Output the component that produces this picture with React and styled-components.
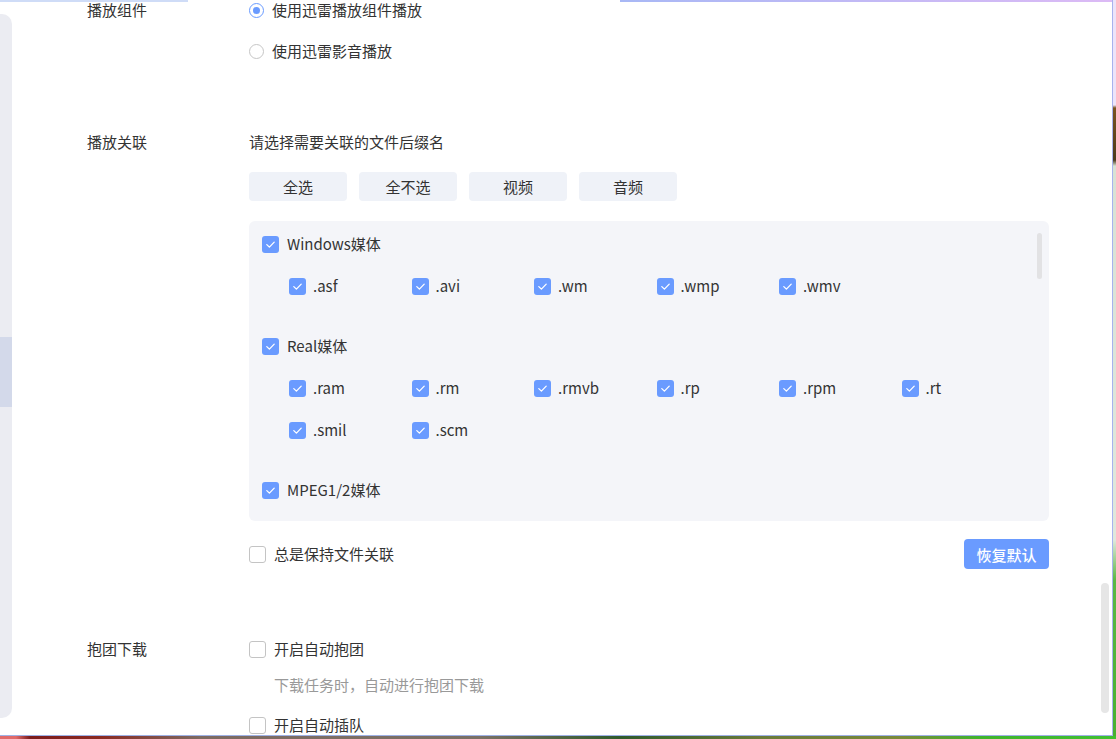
import styled, { createGlobalStyle } from "styled-components"

const GlobalStyle = createGlobalStyle`
	html, body {
		margin: 0;
		padding: 0;
	}
	body {
		width: 1116px;
		height: 739px;
		overflow: hidden;
		font-family: "Noto Sans CJK SC", "Noto Sans", sans-serif;
		font-size: 15px;
		color: #333;
		background: #fff;
	}
`

const groups = [
	{ name: "Windows媒体", items: [".asf", ".avi", ".wm", ".wmp", ".wmv"] },
	{ name: "Real媒体", items: [".ram", ".rm", ".rmvb", ".rp", ".rpm", ".rt", ".smil", ".scm"] },
	{ name: "MPEG1/2媒体", items: [] },
]

const CheckBox = ({ checked, children, sub }) => (
	<CheckRow sub={sub}>
		<Box checked={checked}>
			{checked && (
				<svg width="17" height="17" viewBox="0 0 17 17">
					<polyline points="4.8,8.6 7.4,11.1 12.2,6.1" fill="none" stroke="#fff" strokeWidth="1.3" strokeLinecap="round" strokeLinejoin="round" />
				</svg>
			)}
		</Box>
		{children}
	</CheckRow>
)

const Radio = ({ checked, children }) => (
	<RadioRow>
		<RadioDot checked={checked} />
		{children}
	</RadioRow>
)

const App = () => {
	return (
		<Page>
			<GlobalStyle />
			<WindowRow>
				<Window>
					<HeaderEdge />
					<Sidebar>
						<SidebarActive />
					</Sidebar>
					<Main>
						<Section>
							<Label>播放组件</Label>
							<Content>
								<Radio checked>使用迅雷播放组件播放</Radio>
								<Spacer h={21} />
								<Radio>使用迅雷影音播放</Radio>
							</Content>
						</Section>

						<Section top={71}>
							<Label>播放关联</Label>
							<Content>
								<Line>请选择需要关联的文件后缀名</Line>
								<ButtonRow>
									<FilterButton>全选</FilterButton>
									<FilterButton>全不选</FilterButton>
									<FilterButton>视频</FilterButton>
									<FilterButton>音频</FilterButton>
								</ButtonRow>
								<Panel>
									{groups.map((g, i) => (
										<Group key={g.name} first={i === 0}>
											<CheckBox checked>{g.name}</CheckBox>
											{g.items.length > 0 && (
												<ItemGrid>
													{g.items.map(item => (
														<CheckBox key={item} checked sub>{item}</CheckBox>
													))}
												</ItemGrid>
											)}
										</Group>
									))}
									<PanelScroll />
								</Panel>
								<FooterRow>
									<CheckBox>总是保持文件关联</CheckBox>
									<PrimaryButton>恢复默认</PrimaryButton>
								</FooterRow>
							</Content>
						</Section>

						<Section top={70}>
							<Label>抱团下载</Label>
							<Content>
								<CheckBox>开启自动抱团</CheckBox>
								<Hint>下载任务时，自动进行抱团下载</Hint>
								<Spacer h={20} />
								<CheckBox>开启自动插队</CheckBox>
							</Content>
						</Section>
					</Main>
					<MainScroll />
				</Window>
				<DeskRight />
			</WindowRow>
			<DeskBottom />
		</Page>
	)
}

const Page = styled.div`
	display: flex;
	flex-direction: column;
	width: 1116px;
	height: 739px;
`

const WindowRow = styled.div`
	display: flex;
	height: 736px;
`

const Window = styled.div`
	position: relative;
	display: flex;
	width: 1113px;
	height: 736px;
	box-sizing: border-box;
	background: #fff;
	border-right: 1px solid #a8b2ee;
	border-bottom: 1px solid #9fb2e6;
	overflow: hidden;
`

const HeaderEdge = styled.div`
	position: absolute;
	top: 0;
	left: 0;
	right: 0;
	height: 2px;
	background: linear-gradient(to right, #cfdcf7 0, #cfdcf7 188px, #fff 188px, #fff 620px, #a8b8f5 620px, #dcbaf5 100%);
`

const Sidebar = styled.div`
	display: flex;
	flex-direction: column;
	flex: none;
	width: 12px;
	height: 704px;
	margin-top: 14px;
	background: #ebecf2;
	border-radius: 0 10px 10px 0;
`

const SidebarActive = styled.div`
	margin-top: 323px;
	height: 70px;
	background: #d3d9ea;
`

const Main = styled.div`
	flex: 1;
	padding-left: 75px;
`

const Section = styled.div`
	display: grid;
	grid-template-columns: 162px 800px;
	margin-top: ${p => p.top || 0}px;
`

const Label = styled.div`
	line-height: 20px;
	height: 20px;
	color: #333;
`

const Content = styled.div`
	display: flex;
	flex-direction: column;
	align-items: flex-start;
`

const Spacer = styled.div`
	height: ${p => p.h}px;
	flex: none;
`

const Line = styled.div`
	line-height: 20px;
`

const RadioRow = styled.label`
	display: flex;
	align-items: center;
	gap: 8px;
	height: 20px;
	line-height: 20px;
`

const RadioDot = styled.span`
	position: relative;
	width: 15px;
	height: 15px;
	box-sizing: border-box;
	border-radius: 50%;
	border: 1px solid ${p => (p.checked ? "#6a9bff" : "#c6c6c6")};
	background: #fff;

	&::after {
		content: "";
		display: ${p => (p.checked ? "block" : "none")};
		position: absolute;
		left: 3px;
		top: 3px;
		width: 7px;
		height: 7px;
		border-radius: 50%;
		background: #6a9bff;
	}
`

const ButtonRow = styled.div`
	display: flex;
	gap: 12px;
	margin-top: 20px;
`

const FilterButton = styled.button`
	width: 98px;
	height: 29px;
	border: none;
	border-radius: 4px;
	background: #eff2f8;
	color: #333;
	font-family: inherit;
	font-size: 15px;
	padding: 0;
	cursor: pointer;
`

const Panel = styled.div`
	position: relative;
	width: 800px;
	height: 300px;
	margin-top: 20px;
	box-sizing: border-box;
	padding: 13px 0 0 13px;
	background: #f4f5f9;
	border-radius: 6px;
	overflow: hidden;
`

const PanelScroll = styled.div`
	position: absolute;
	top: 12px;
	right: 7px;
	width: 5px;
	height: 46px;
	border-radius: 3px;
	background: #e2e2e4;
`

const Group = styled.div`
	margin-top: ${p => (p.first ? 0 : 40)}px;
`

const ItemGrid = styled.div`
	display: grid;
	grid-template-columns: repeat(6, 122.5px);
	row-gap: 22px;
	margin-top: 22px;
	padding-left: 27px;
`

const CheckRow = styled.label`
	display: flex;
	align-items: center;
	gap: ${p => (p.sub ? 7 : 8)}px;
	height: 20px;
	line-height: 20px;
	white-space: nowrap;
`

const Box = styled.span`
	display: flex;
	flex: none;
	width: 17px;
	height: 17px;
	box-sizing: border-box;
	border-radius: 3px;
	background: ${p => (p.checked ? "#6a9bff" : "#fff")};
	border: ${p => (p.checked ? "none" : "1px solid #c4c4c4")};
`

const FooterRow = styled.div`
	display: flex;
	align-items: center;
	justify-content: space-between;
	width: 800px;
	height: 30px;
	margin-top: 18px;
`

const PrimaryButton = styled.button`
	width: 85px;
	height: 30px;
	border: none;
	border-radius: 4px;
	background: #6a9bff;
	color: #fff;
	font-family: inherit;
	font-size: 15px;
	font-weight: 500;
	padding: 0;
`

const Hint = styled.div`
	margin-top: 16px;
	padding-left: 25px;
	line-height: 20px;
	color: #999;
`

const MainScroll = styled.div`
	position: absolute;
	top: 583px;
	right: 3px;
	width: 8px;
	height: 130px;
	border-radius: 4px;
	background: #e6e6e6;
`

const DeskRight = styled.div`
	width: 3px;
	height: 736px;
	background: linear-gradient(to bottom, #ece4fa 0, #ece4fa 105px, #7a5420 108px, #4a3a1c 160px, #d8e2d4 166px, #dfe8dc 540px, #5bb844 580px, #48b030 100%);
`

const DeskBottom = styled.div`
	height: 3px;
	background: linear-gradient(to right, #e06a6a 0, #e06a6a 16px, #7a1c1c 30px, #8a2a22 100px, #7d6a62 200px, #7a7066 480px, #2f5a2c 620px, #6a7a3a 760px, #7a8a3a 900px, #3fb42c 980px, #40c030 100%);
`

export default App
